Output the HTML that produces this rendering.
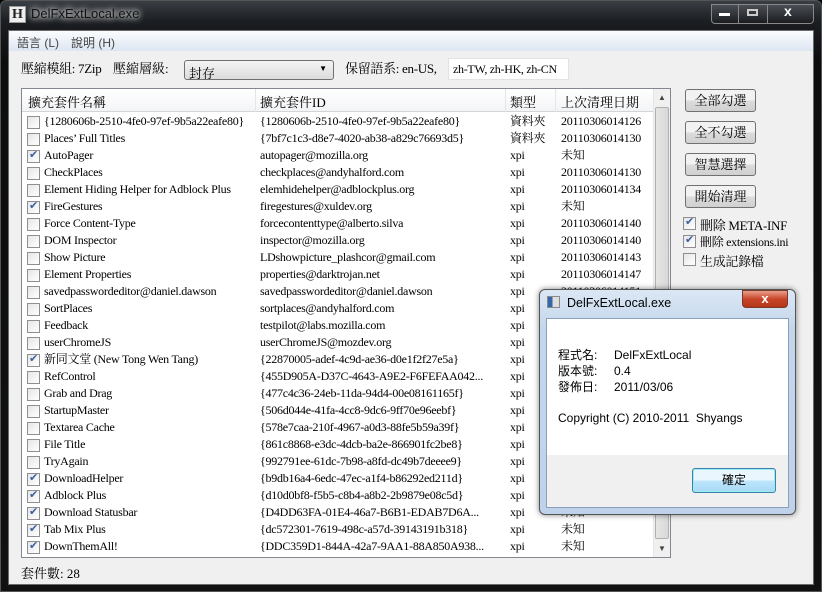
<!DOCTYPE html>
<html><head><meta charset="utf-8"><style>
*{margin:0;padding:0;box-sizing:border-box}
body{width:822px;height:592px;background:#000;position:relative;overflow:hidden;font-family:"Liberation Serif","Noto Serif CJK SC","Noto Sans CJK TC",serif;font-size:12px;color:#000}
.abs{position:absolute}
.frame{left:0;top:0;width:822px;height:592px;background:linear-gradient(180deg,#3a3f45 0,#1b1e22 20px,#0c0d0f 60px,#111 100%);border-radius:6px 6px 0 0;border:1px solid #555}
.client{left:8px;top:30px;width:806px;height:555px;background:#f0f0f0;border:1px solid #6b6b6b}
.menu{left:0;top:0;width:804px;height:20px;background:linear-gradient(#fbfcfe,#dde6f2);font-family:"Liberation Sans","Noto Sans CJK TC",sans-serif;color:#444}
.sans{font-family:"Liberation Sans","Noto Sans CJK TC",sans-serif}
.list{left:12px;top:57px;width:650px;height:470px;background:#fff;border:1px solid #828790;overflow:hidden}
.hdr{position:absolute;left:0;top:0;width:631px;height:23px;background:linear-gradient(#fff,#f3f4f6);border-bottom:1px solid #d5d5d5;font-size:13px}
.hdr span{position:absolute;top:3px}
.sep{position:absolute;top:0;width:1px;height:23px;background:#e3e5e8}
.row{position:absolute;left:0;height:17px;width:631px;white-space:nowrap;font-size:12px;letter-spacing:-0.25px}
.row span{position:absolute;top:0;line-height:17px}
.cb{position:absolute;left:5px;top:3px;width:13px;height:13px;border:1px solid #8f8f8f;background:linear-gradient(135deg,#e6e6e6,#fff)}
.cb.c::after{content:"✔";position:absolute;left:1px;top:-3px;font-size:11px;color:#3b5fa0;font-family:"DejaVu Sans",sans-serif;letter-spacing:0}
.sb{position:absolute;left:631px;top:0;width:17px;height:468px;background:#f0f0f0;border-left:1px solid #e6e6e6}
.btn{position:absolute;left:676px;width:71px;height:23px;border:1px solid #707070;border-radius:3px;background:linear-gradient(#f2f2f2 50%,#dcdcdc 50%,#d0d0d0);font-size:13px;text-align:center;line-height:21px}
</style></head><body>
<div class="abs frame"></div>
<div class="abs" style="left:9px;top:6px;width:17px;height:17px;background:#eee;border:1px solid #999;font:bold 14px 'Liberation Serif',serif;text-align:center;line-height:15px;color:#222">H</div>
<div class="abs sans" style="left:31px;top:6px;font-size:13px;color:#111;text-shadow:0 0 6px #fff,0 0 8px #fff">DelFxExtLocal.exe</div>
<div class="abs" style="left:711px;top:4px;width:103px;height:20px;border:1px solid #888;border-radius:0 0 4px 4px;background:linear-gradient(#4a4f55,#1a1c1f)"></div>
<div class="abs" style="left:738px;top:4px;width:1px;height:19px;background:#888"></div>
<div class="abs" style="left:767px;top:4px;width:1px;height:19px;background:#888"></div>
<div class="abs" style="left:719px;top:13px;width:11px;height:3px;background:#fff"></div>
<div class="abs" style="left:747px;top:9px;width:11px;height:7px;border:2px solid #ccc"></div>
<div class="abs sans" style="left:784px;top:3px;color:#fff;font-weight:bold;font-size:14px">x</div>

<div class="abs client">
 <div class="abs menu"><span class="abs" style="left:8px;top:3px">語言 (L)</span><span class="abs" style="left:62px;top:3px">說明 (H)</span></div>
 <span class="abs" style="left:12px;top:27px;font-size:13px;letter-spacing:-0.3px">壓縮模組: 7Zip</span>
 <span class="abs" style="left:104px;top:27px;font-size:13px">壓縮層級:</span>
 <div class="abs" style="left:175px;top:29px;width:150px;height:20px;border:1px solid #707070;border-radius:3px;background:linear-gradient(#f4f4f4,#dcdcdc);font-size:13px;padding:2px 4px">封存<span style="position:absolute;right:6px;top:3px;font-size:8px">▼</span></div>
 <span class="abs" style="left:336px;top:27px;font-size:13px;letter-spacing:-0.3px">保留語系: en-US,</span>
 <div class="abs" style="left:439px;top:27px;width:121px;height:22px;background:#fff;border:1px solid #e3e3e3;font-size:12px;letter-spacing:-0.3px;padding:3px 4px;white-space:nowrap;overflow:hidden">zh-TW, zh-HK, zh-CN</div>

 <div class="abs list">
  <div class="hdr"><span style="left:6px">擴充套件名稱</span><div class="sep" style="left:233px"></div><span style="left:238px">擴充套件ID</span><div class="sep" style="left:483px"></div><span style="left:488px">類型</span><div class="sep" style="left:533px"></div><span style="left:539px">上次清理日期</span></div>
  <div id="rows"></div>
  <div class="sb"><div style="position:absolute;left:0;top:0;width:16px;height:17px;font-size:8px;text-align:center;line-height:17px;color:#444">▲</div><div style="position:absolute;left:1px;top:18px;width:14px;height:432px;border:1px solid #b0b0b0;border-radius:2px;background:linear-gradient(90deg,#e6e6e6,#d8d8d8)"></div><div style="position:absolute;left:0;top:451px;width:16px;height:17px;font-size:8px;text-align:center;line-height:17px;color:#444">▼</div></div>
 </div>

 <div class="btn" style="top:58px">全部勾選</div>
 <div class="btn" style="top:90px">全不勾選</div>
 <div class="btn" style="top:122px">智慧選擇</div>
 <div class="btn" style="top:154px">開始清理</div>
 <div class="abs" style="left:674px;top:184px;width:130px;height:60px;letter-spacing:-0.3px">
  <div class="cb c" style="left:0;top:2px"></div><span class="abs" style="left:17px;top:0;font-size:13px">刪除 META-INF</span>
  <div class="cb c" style="left:0;top:20px"></div><span class="abs" style="left:17px;top:18px;font-size:12px">刪除 extensions.ini</span>
  <div class="cb" style="left:0;top:38px"></div><span class="abs" style="left:17px;top:36px;font-size:13px">生成記錄檔</span>
 </div>
 <span class="abs" style="left:12px;top:532px;font-size:13px">套件數: 28</span>
</div>

<div class="abs" style="left:539px;top:289px;width:257px;height:226px;border:1px solid #555;border-radius:6px;background:linear-gradient(#dbe7f5,#c4d6ec 40px,#bfd2ea);box-shadow:0 0 6px rgba(0,0,0,.5)"></div>
<div class="abs" style="left:547px;top:296px;width:13px;height:12px;background:linear-gradient(90deg,#3366aa 40%,#ddd 40%);border:1px solid #888"></div>
<div class="abs sans" style="left:567px;top:296px;font-size:12.5px;color:#000">DelFxExtLocal.exe</div>
<div class="abs" style="left:742px;top:290px;width:46px;height:18px;border:1px solid #7a3a2a;border-radius:0 0 4px 4px;background:linear-gradient(#e8a08a,#c8452a 50%,#b53418);color:#fff;text-align:center;font:bold 13px 'Liberation Sans',sans-serif;line-height:15px">x</div>
<div class="abs" style="left:546px;top:318px;width:243px;height:190px;border:1px solid #8aa0b8;background:#f0f0f0"></div>
<div class="abs sans" style="left:547px;top:319px;width:241px;height:136px;background:#fff;font-size:12px">
 <div class="abs" style="left:11px;top:28px;line-height:16px">程式名:<br>版本號:<br>發佈日:</div>
 <div class="abs" style="left:67px;top:28px;line-height:16px">DelFxExtLocal<br>0.4<br>2011/03/06</div>
 <div class="abs" style="left:11px;top:92px">Copyright (C) 2010-2011&nbsp; Shyangs</div>
</div>
<div class="abs sans" style="left:692px;top:468px;width:84px;height:25px;border:1px solid #3c7fb1;border-radius:3px;background:linear-gradient(#eaf6fd 50%,#bee6fd 50%,#a7d9f5);text-align:center;line-height:23px;font-size:12px;box-shadow:inset 0 0 0 1px #9ee">確定</div>

<script>
var d=[["{1280606b-2510-4fe0-97ef-9b5a22eafe80}","{1280606b-2510-4fe0-97ef-9b5a22eafe80}","資料夾","20110306014126",0],
["Places’ Full Titles","{7bf7c1c3-d8e7-4020-ab38-a829c76693d5}","資料夾","20110306014130",0],
["AutoPager","autopager@mozilla.org","xpi","未知",1],
["CheckPlaces","checkplaces@andyhalford.com","xpi","20110306014130",0],
["Element Hiding Helper for Adblock Plus","elemhidehelper@adblockplus.org","xpi","20110306014134",0],
["FireGestures","firegestures@xuldev.org","xpi","未知",1],
["Force Content-Type","forcecontenttype@alberto.silva","xpi","20110306014140",0],
["DOM Inspector","inspector@mozilla.org","xpi","20110306014140",0],
["Show Picture","LDshowpicture_plashcor@gmail.com","xpi","20110306014143",0],
["Element Properties","properties@darktrojan.net","xpi","20110306014147",0],
["savedpasswordeditor@daniel.dawson","savedpasswordeditor@daniel.dawson","xpi","20110306014151",0],
["SortPlaces","sortplaces@andyhalford.com","xpi","20110306014154",0],
["Feedback","testpilot@labs.mozilla.com","xpi","20110306014158",0],
["userChromeJS","userChromeJS@mozdev.org","xpi","20110306014201",0],
["新同文堂 (New Tong Wen Tang)","{22870005-adef-4c9d-ae36-d0e1f2f27e5a}","xpi","未知",1],
["RefControl","{455D905A-D37C-4643-A9E2-F6FEFAA042...","xpi","20110306014208",0],
["Grab and Drag","{477c4c36-24eb-11da-94d4-00e08161165f}","xpi","20110306014211",0],
["StartupMaster","{506d044e-41fa-4cc8-9dc6-9ff70e96eebf}","xpi","20110306014215",0],
["Textarea Cache","{578e7caa-210f-4967-a0d3-88fe5b59a39f}","xpi","20110306014218",0],
["File Title","{861c8868-e3dc-4dcb-ba2e-866901fc2be8}","xpi","20110306014222",0],
["TryAgain","{992791ee-61dc-7b98-a8fd-dc49b7deeee9}","xpi","20110306014225",0],
["DownloadHelper","{b9db16a4-6edc-47ec-a1f4-b86292ed211d}","xpi","未知",1],
["Adblock Plus","{d10d0bf8-f5b5-c8b4-a8b2-2b9879e08c5d}","xpi","未知",1],
["Download Statusbar","{D4DD63FA-01E4-46a7-B6B1-EDAB7D6A...","xpi","未知",1],
["Tab Mix Plus","{dc572301-7619-498c-a57d-39143191b318}","xpi","未知",1],
["DownThemAll!","{DDC359D1-844A-42a7-9AA1-88A850A938...","xpi","未知",1]];
var h="";d.forEach(function(r,i){h+='<div class="row" style="top:'+(24+i*17)+'px"><div class="cb'+(r[4]?' c':'')+'"></div><span style="left:22px">'+r[0]+'</span><span style="left:238px">'+r[1]+'</span><span style="left:488px">'+r[2]+'</span><span style="left:539px">'+r[3]+'</span></div>'});
document.getElementById("rows").innerHTML=h;
</script>
</body></html>
